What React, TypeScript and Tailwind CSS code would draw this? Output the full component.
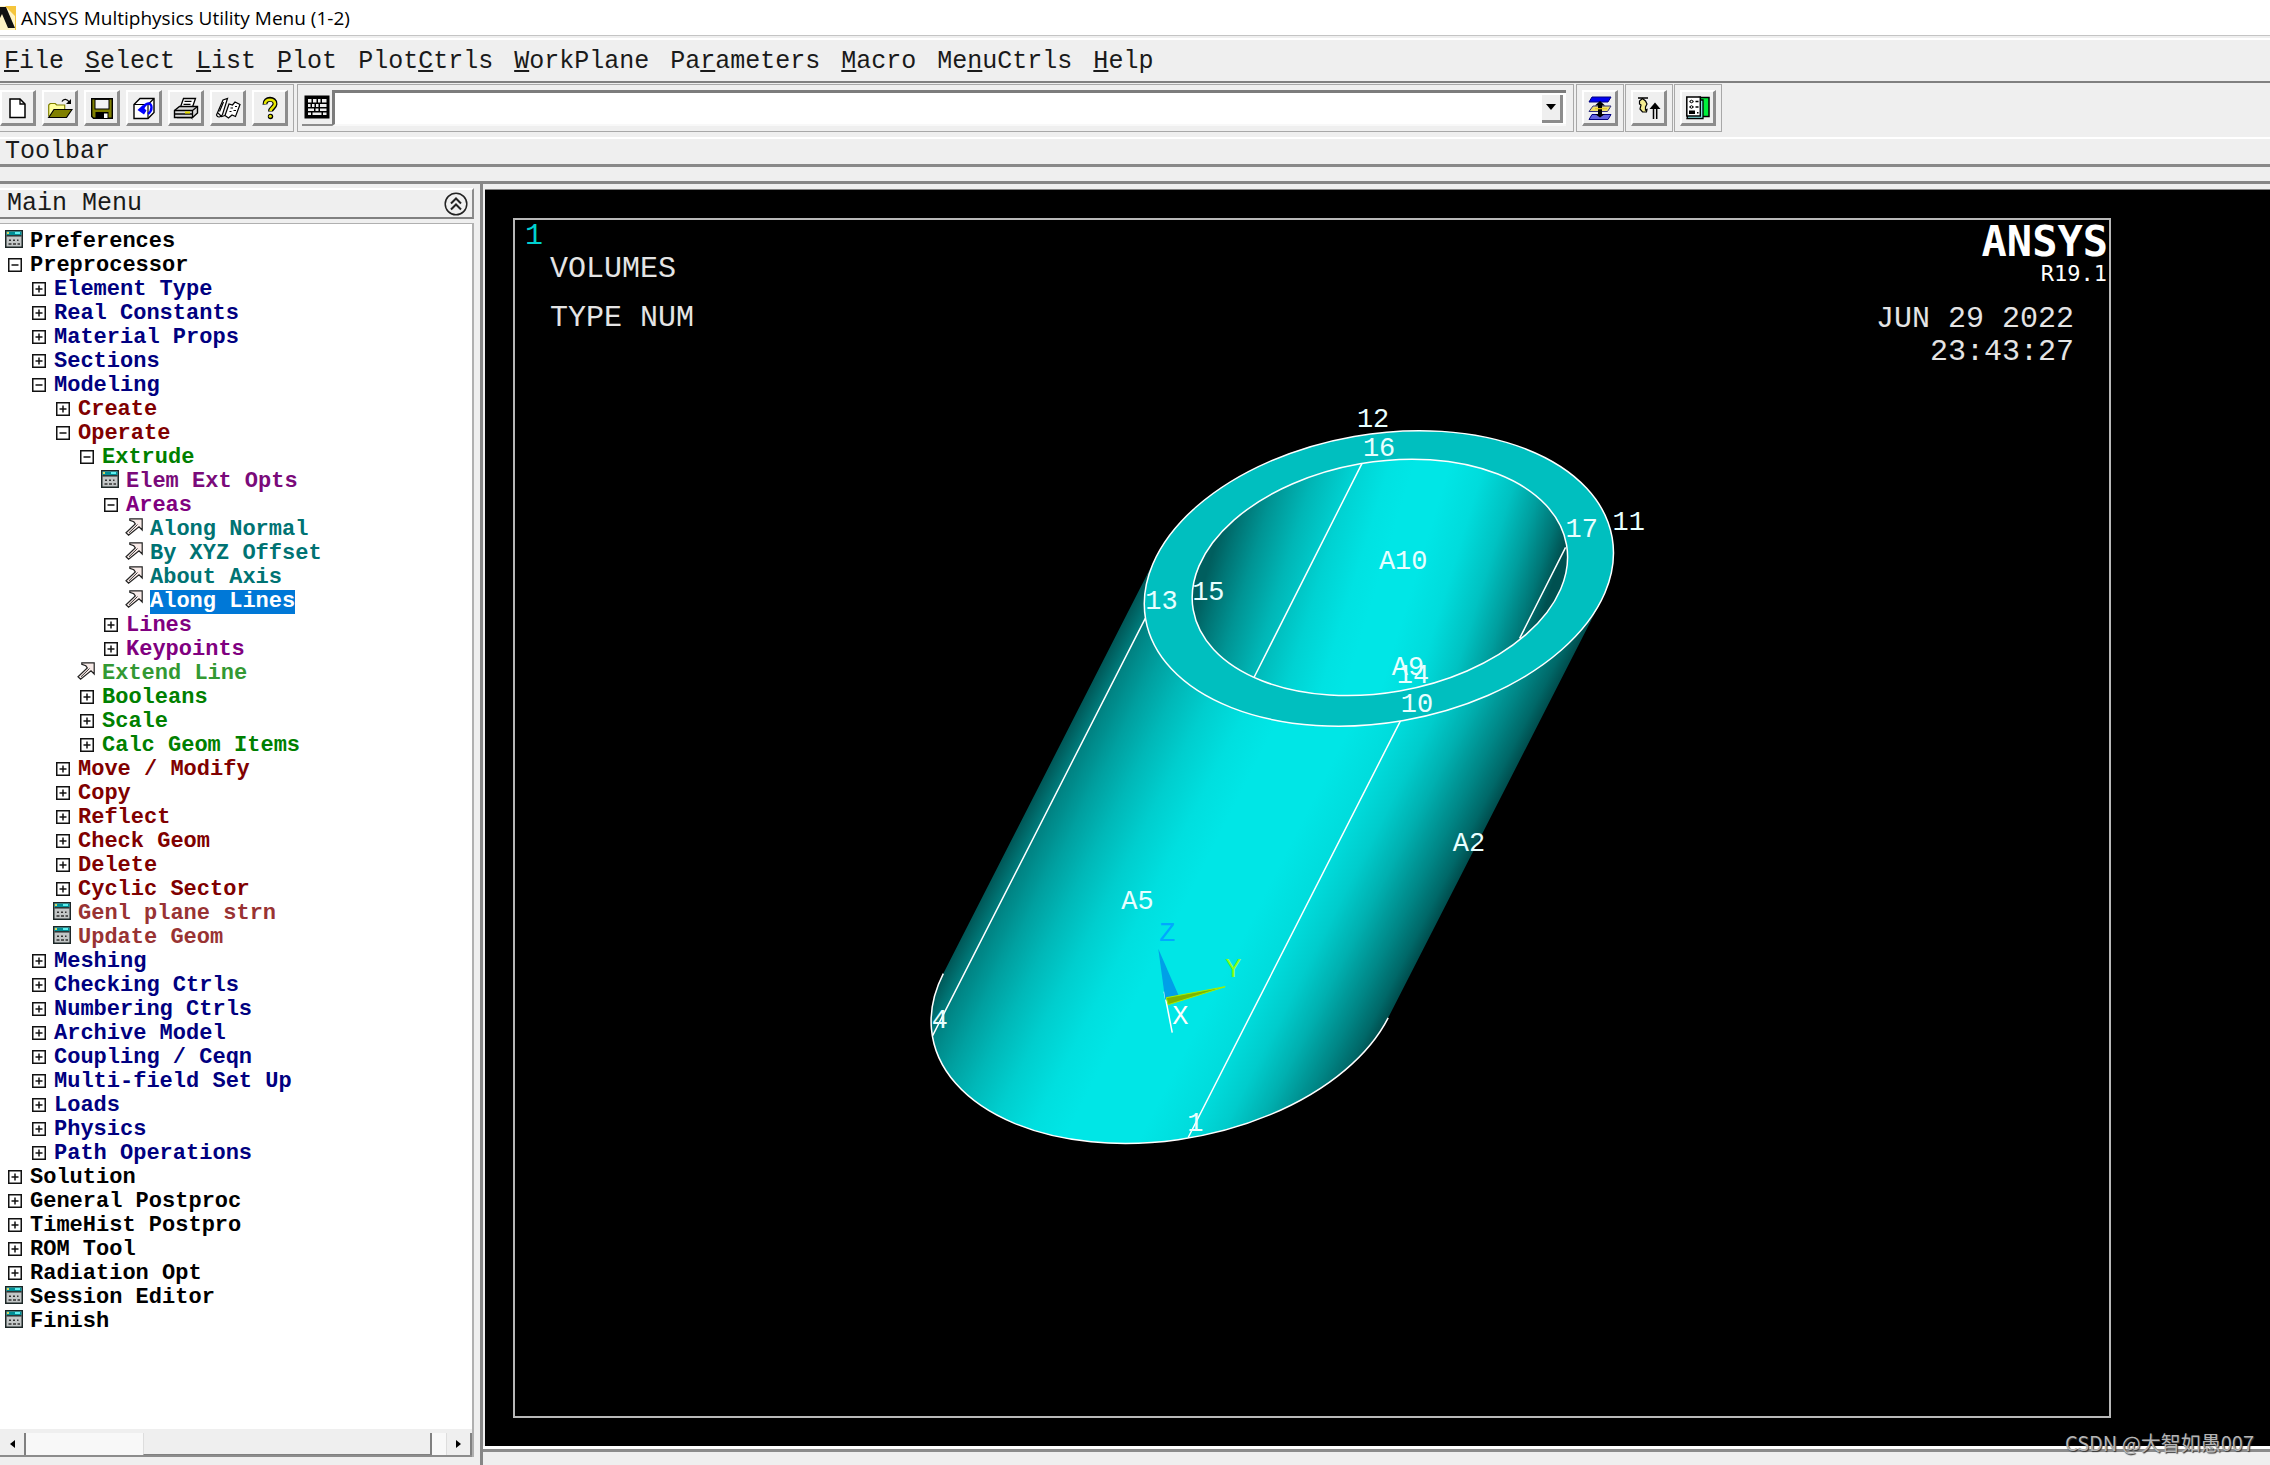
import React from "react";

type Kind = "plus" | "minus" | "dialog" | "pick";
type Tone = "root" | "navy" | "maroon" | "brick" | "green" | "lime" | "purple" | "plum" | "teal" | "selected";
type Node = [level: number, kind: Kind, label: string, tone: Tone];

const toneClass: Record<Tone, string> = {
  root: "text-black",
  navy: "text-[#000080]",
  maroon: "text-[#800000]",
  brick: "text-[#993333]",
  green: "text-[#008000]",
  lime: "text-[#339933]",
  purple: "text-[#800080]",
  plum: "text-[#7a0a7a]",
  teal: "text-[#007373]",
  selected: "bg-[#0078d7] text-white",
};

const indentClass = ["pl-[5px]", "pl-[29px]", "pl-[53px]", "pl-[77px]", "pl-[101px]", "pl-[125px]"];

const tree: Node[] = [
  [0, "dialog", "Preferences", "root"],
  [0, "minus", "Preprocessor", "root"],
  [1, "plus", "Element Type", "navy"],
  [1, "plus", "Real Constants", "navy"],
  [1, "plus", "Material Props", "navy"],
  [1, "plus", "Sections", "navy"],
  [1, "minus", "Modeling", "navy"],
  [2, "plus", "Create", "maroon"],
  [2, "minus", "Operate", "maroon"],
  [3, "minus", "Extrude", "green"],
  [4, "dialog", "Elem Ext Opts", "plum"],
  [4, "minus", "Areas", "purple"],
  [5, "pick", "Along Normal", "teal"],
  [5, "pick", "By XYZ Offset", "teal"],
  [5, "pick", "About Axis", "teal"],
  [5, "pick", "Along Lines", "selected"],
  [4, "plus", "Lines", "purple"],
  [4, "plus", "Keypoints", "purple"],
  [3, "pick", "Extend Line", "lime"],
  [3, "plus", "Booleans", "green"],
  [3, "plus", "Scale", "green"],
  [3, "plus", "Calc Geom Items", "green"],
  [2, "plus", "Move / Modify", "maroon"],
  [2, "plus", "Copy", "maroon"],
  [2, "plus", "Reflect", "maroon"],
  [2, "plus", "Check Geom", "maroon"],
  [2, "plus", "Delete", "maroon"],
  [2, "plus", "Cyclic Sector", "maroon"],
  [2, "dialog", "Genl plane strn", "brick"],
  [2, "dialog", "Update Geom", "brick"],
  [1, "plus", "Meshing", "navy"],
  [1, "plus", "Checking Ctrls", "navy"],
  [1, "plus", "Numbering Ctrls", "navy"],
  [1, "plus", "Archive Model", "navy"],
  [1, "plus", "Coupling / Ceqn", "navy"],
  [1, "plus", "Multi-field Set Up", "navy"],
  [1, "plus", "Loads", "navy"],
  [1, "plus", "Physics", "navy"],
  [1, "plus", "Path Operations", "navy"],
  [0, "plus", "Solution", "root"],
  [0, "plus", "General Postproc", "root"],
  [0, "plus", "TimeHist Postpro", "root"],
  [0, "plus", "ROM Tool", "root"],
  [0, "plus", "Radiation Opt", "root"],
  [0, "dialog", "Session Editor", "root"],
  [0, "dialog", "Finish", "root"],
];

function TreeIcon({ kind }: { kind: Kind }) {
  if (kind === "plus" || kind === "minus") {
    return (
      <svg viewBox="0 0 18 18" className="size-[18px]" fill="none" stroke="#111">
        <rect x="3.75" y="4.75" width="12.5" height="12.5" strokeWidth="1.5" />
        <path d="M6.5 11h7" strokeWidth="1.5" />
        {kind === "plus" && <path d="M10 7.5v7" strokeWidth="1.5" />}
      </svg>
    );
  }
  if (kind === "dialog") {
    return (
      <svg viewBox="0 0 18 18" className="size-[18px]">
        <rect x="0.75" y="0.75" width="16.5" height="16.5" fill="#c3c7c7" stroke="#1c2626" strokeWidth="1.5" />
        <rect x="1.5" y="1.5" width="15" height="3.5" fill="#008f96" />
        <rect x="2" y="2" width="2" height="2" fill="#d8d860" />
        <rect x="10" y="2" width="5" height="2" fill="#5ff0f0" />
        <path d="M1.5 5.8h15" stroke="#1c2626" strokeWidth="1.4" />
        <path d="M4 10.2h2M8 10.2h2M12 10.2h1.5M3.5 14h3M8 14h3M12.5 14h2.5" stroke="#333" strokeWidth="1.4" />
      </svg>
    );
  }
  return (
    <svg viewBox="0 0 18 18" className="size-[18px]">
      <path
        d="M4.800 0.800H17.200V12L14 8.800L3.600 17.200L1 14.800L10.300 6L8.800 3.800L4.800 2.300Z"
        fill="#f8ebe8"
        stroke="#222"
        strokeWidth="1.200"
      />
      <path d="M12.500 6.500L4 14.800" stroke="#222" strokeWidth="0.900" />
    </svg>
  );
}

const menus: [string, string, string][] = [
  ["", "F", "ile"],
  ["", "S", "elect"],
  ["", "L", "ist"],
  ["", "P", "lot"],
  ["Plot", "C", "trls"],
  ["", "W", "orkPlane"],
  ["Pa", "r", "ameters"],
  ["", "M", "acro"],
  ["Me", "n", "uCtrls"],
  ["", "H", "elp"],
];

function ToolButton({ label, children }: { label: string; children: React.ReactNode }) {
  return (
    <button
      type="button"
      aria-label={label}
      className="flex size-9 shrink-0 items-center justify-center border-r-[3px] border-b-[3px] border-l-2 border-t-2 border-t-white border-l-white border-r-[#8c8c8c] border-b-[#8c8c8c] bg-[#efefef]"
    >
      <svg viewBox="0 0 26 24" className="h-6 w-[26px]">
        {children}
      </svg>
    </button>
  );
}

const groupBox = "flex items-center border border-[#a8a8a8] h-12";

function Toolbar() {
  return (
    <div className="flex h-[54px] items-start gap-[3px] pt-px">
      <div className={groupBox + " -ml-px gap-1.5 pr-[5px]"}>
        <ToolButton label="New Analysis">
          <path d="M5 3h10l5 5v13.5H5z" fill="#fff" stroke="#000" strokeWidth="1.5" />
          <path d="M15 3v5h5" fill="none" stroke="#000" strokeWidth="1.3" />
        </ToolButton>
        <ToolButton label="Open ANSYS File">
          <path d="M1.7 20.5V9l1.5-1.500h5L9.7 9h8v4" fill="#ffff9c" stroke="#808000" strokeWidth="1.2" />
          <path d="M1.7 21.5L7 13.5h18L19.5 21.5z" fill="#808000" stroke="#000" strokeWidth="1.2" />
          <path d="M15 5.5c1.5-3 5-3 7.500.8" fill="none" stroke="#000" strokeWidth="1.3" />
          <path d="M24 3v5h-5z" fill="#000" />
        </ToolButton>
        <ToolButton label="Save">
          <path d="M2.7 2.7h20.6v19.6H4.500l-1.800-1.800z" fill="#808000" stroke="#000" strokeWidth="1.4" />
          <rect x="6" y="3.4" width="14" height="9.6" fill="#f4f4f4" stroke="#000" />
          <rect x="6.5" y="16" width="13" height="6.5" fill="#000" />
          <rect x="15" y="17.5" width="3.5" height="4.5" fill="#fff" />
        </ToolButton>
        <ToolButton label="Pan-Zoom-Rotate">
          <path d="M3 8.5L9 2.5h14v14l-6 6H3z" fill="#fff" stroke="#000" strokeWidth="1.4" />
          <path d="M3 8.5h14v14M17 8.5l6-6" fill="none" stroke="#000" strokeWidth="1.2" />
          <path d="M6.500 14l6-5.500v3l3 3-2.500 4z" fill="#0000ff" />
          <path d="M12 12.500c3-6.500 8.500-6.500 8.500-1 0 3-1.500 5-3.500 6.500" fill="none" stroke="#0000ff" strokeWidth="2.400" />
        </ToolButton>
        <ToolButton label="Image Capture">
          <path d="M7.5 11L10.5 2.5h12L19.5 11z" fill="#fff" stroke="#000" strokeWidth="1.3" />
          <path d="M11.5 5.3h7M10.5 8.3h7" stroke="#000" strokeWidth="1.2" />
          <path d="M1.5 14.5L6.5 10.5H24.5V17l-5 4.5H1.5z" fill="#d8d8d8" stroke="#000" strokeWidth="1.4" />
          <path d="M1.5 14.5h18v7M19.5 14.5l5-4M2 18h17" fill="none" stroke="#000" strokeWidth="1.3" />
          <rect x="12" y="15.5" width="5" height="2" fill="#e8e000" />
          <path d="M4 21.7h14l1.5 1.3" stroke="#000" fill="none" />
        </ToolButton>
        <ToolButton label="Report Generator">
          <path d="M1.5 19L8 4l4.500-1.500L7.500 18.500C6 21.500 2.500 22 1.500 19z" fill="#fff" stroke="#000" strokeWidth="1.2" />
          <path d="M10 19.5L14 8l3.500 1 2.500-3 5 2.500L20.500 20.500l-3.500-1.500-3.500 3z" fill="#fff" stroke="#000" strokeWidth="1.2" />
          <path d="M15.500 12h2.500M20 10.500h2M14.500 15.500h2M18.500 14.500h2.500M8.500 6L4.500 15.5M3 17l3.500 3.500 3.500-1" stroke="#000" strokeWidth="1.2" fill="none" />
        </ToolButton>
        <ToolButton label="ANSYS Help">
          <path d="M8 8.500C7.500 1.500 18.500 1.500 18 8c-.3 4-4.500 4-4.500 7.500" fill="none" stroke="#000" strokeWidth="5" />
          <path d="M8 8C7.700 2.300 18.200 2.300 18 8c-.3 3.500-4.500 4-4.500 7" fill="none" stroke="#e6e600" strokeWidth="2.600" />
          <circle cx="13.5" cy="20.5" r="2.700" fill="#000" />
          <circle cx="13.3" cy="20.2" r="1.5" fill="#e6e600" />
        </ToolButton>
      </div>

      <div className={groupBox + " w-[1277px] min-w-0 pl-1 pr-[7px]"}>
        <button
          type="button"
          aria-label="Command Window"
          className="flex h-9 w-[30px] shrink-0 items-center border-b-2 border-b-[#8c8c8c] pl-0.5"
        >
          <svg viewBox="0 0 26 24" className="h-6 w-[26px]">
            <rect x="0.5" y="0.5" width="25" height="23" fill="#000" />
            <g fill="#efefef">
              <path d="M4 4h3.500v3.500H4zM9 4h3.500v3.500H9zM14 4h2.500v3.500H14zM18 4h4.500v3.500H18z" />
              <path d="M4 9h2.500v3H4zM8 9h2.500v3H8zM12 9h2.500v3H12zM16 9h6.500v3H16z" />
              <path d="M4 13.500h6V16H4zM11.500 13.500h3V16h-3zM16 13.500h6.500V16H16z" />
              <path d="M4 17.500h3V20H4zM8.500 17.500h9V20h-9zM19 17.500h3.500V20H19z" />
            </g>
          </svg>
        </button>
        <div className="flex h-9 min-w-0 flex-1 items-center border-b-2 border-l-[3px] border-t-[3px] border-b-[#f8f8f8] border-l-[#7c7c7c] border-t-[#7c7c7c] bg-white pr-[3px]">
          <input
            aria-label="Command"
            className="h-full min-w-0 flex-1 bg-white px-2 font-['Liberation_Mono',monospace] text-[25px] outline-none"
          />
          <button
            type="button"
            aria-label="Command history"
            className="flex h-7 w-[21px] items-center justify-center border-b-[3px] border-r-[3px] border-b-[#8c8c8c] border-r-[#8c8c8c] bg-[#efefef]"
          >
            <svg viewBox="0 0 10 6" className="h-1.5 w-2.5">
              <path d="M0 0h10L5 6z" fill="#000" />
            </svg>
          </button>
        </div>
      </div>

      <div className="-ml-px flex gap-px">
        <div className={groupBox + " px-[5px]"}>
          <ToolButton label="Raise Hidden">
            <path d="M5 1h19l-3 5H2z" fill="#0000f0" stroke="#000080" />
            <path d="M5 18.5h19l-3 5H2z" fill="#6464e0" stroke="#000080" />
            <path d="M6 10h18l-3.500 5.500H2z" fill="#f0e068" stroke="#303080" />
            <path d="M13 5l5 4.500h-3V18h3l-5 3.500L8 18h3V9.500H8z" fill="#000" />
            <path d="M8 12.700h12" stroke="#e8c820" strokeWidth="1.200" />
          </ToolButton>
        </div>
        <div className={groupBox + " px-[5px]"}>
          <ToolButton label="Reset Picking">
            <path d="M2 2h10" stroke="#000" strokeWidth="1.5" />
            <path
              d="M6.500 2.500L3.500 5v3l1.500 1-1 4 2.500 3h4l.5-2.500-1.500.5V11l1.500-3-1.500-3z"
              fill="#f4ec90"
              stroke="#000"
              strokeWidth="1.2"
            />
            <path d="M19 6.500l-5.500 6.500h11z" fill="#000" />
            <path d="M17.5 12v11M20.7 12v11" stroke="#000" strokeWidth="1.5" />
          </ToolButton>
        </div>
        <div className={groupBox + " px-[5px]"}>
          <ToolButton label="Contact Manager">
            <rect x="14" y="1.5" width="10" height="19" fill="#00f03c" stroke="#000" strokeWidth="1.5" />
            <path d="M6 4h12v18.5H2z" fill="#8ff0f0" stroke="#000" strokeWidth="1.3" />
            <rect x="1.8" y="1" width="13.5" height="19" fill="#fff" stroke="#000" strokeWidth="1.5" />
            <path d="M4.5 5.5h4M10.5 5.5h3M4.5 11h4M10.5 11h3" stroke="#000" strokeWidth="1.5" />
            <circle cx="6.5" cy="5.5" r="1.3" fill="#fff" stroke="#000" />
            <circle cx="6.5" cy="11" r="1.3" fill="#fff" stroke="#000" />
            <rect x="4" y="14.5" width="6" height="3.5" fill="#000" />
            <rect x="12" y="16" width="1.5" height="1.5" fill="#000" />
          </ToolButton>
        </div>
      </div>
    </div>
  );
}

const labels: [number, number, string][] = [
  [1357, 426, "12"],
  [1363, 455, "16"],
  [1566, 537, "17"],
  [1613, 530, "11"],
  [1145, 609, "13"],
  [1192, 600, "15"],
  [1379, 569, "A10"],
  [1392, 675, "A9"],
  [1397, 683, "14"],
  [1401, 712, "10"],
  [1453, 851, "A2"],
  [1121, 909, "A5"],
  [931, 1028, "4"],
  [1187, 1132, "1"],
];

const outerStops: [string, string][] = [
  ["0", "#005656"],
  ["0.05", "#008282"],
  ["0.12", "#00a0a0"],
  ["0.19", "#00b8b8"],
  ["0.27", "#00cece"],
  ["0.36", "#00dfdf"],
  ["0.44", "#00e6e6"],
  ["0.6", "#00e6e6"],
  ["0.7", "#00dcdc"],
  ["0.77", "#00cccc"],
  ["0.84", "#00b0b0"],
  ["0.92", "#008686"],
  ["0.97", "#006868"],
  ["1", "#004c4c"],
];

const innerStops: [string, string][] = [
  ["0", "#005e5e"],
  ["0.05", "#007676"],
  ["0.12", "#009494"],
  ["0.22", "#00b6b6"],
  ["0.33", "#00d2d2"],
  ["0.43", "#00e2e2"],
  ["0.5", "#00e6e6"],
  ["0.6", "#00e6e6"],
  ["0.7", "#00dcdc"],
  ["0.8", "#00c2c2"],
  ["0.88", "#009e9e"],
  ["0.95", "#007676"],
  ["1", "#005050"],
];

function Model() {
  return (
    <svg
      viewBox="515 219 1594 1198"
      className="absolute inset-0 h-full w-full"
      role="img"
      aria-label="Hollow cylinder volume"
    >
      <defs>
        <linearGradient id="outer" gradientUnits="userSpaceOnUse" x1="1193" y1="483" x2="1565" y2="673">
          {outerStops.map(([o, c]) => (
            <stop key={o} offset={o} stopColor={c} />
          ))}
        </linearGradient>
        <linearGradient id="inner" gradientUnits="userSpaceOnUse" x1="1231" y1="501" x2="1529" y2="653">
          {innerStops.map(([o, c]) => (
            <stop key={o} offset={o} stopColor={c} />
          ))}
        </linearGradient>
      </defs>
      <path d="M1156.2 555.8L942.7 973.8A237.2 144.4 -9.9 0 0 1388.3 1018.2L1601.8 600.2Z" fill="url(#outer)" />
      <g fill="none" stroke="#fff" strokeWidth="1.5">
        <path d="M942.7 973.8A237.2 144.4 -9.9 0 0 1388.3 1018.2" />
        <path d="M1145 618L932 1036M1401 720L1188 1138" />
        <ellipse cx="1379" cy="578" rx="237.2" ry="144.4" transform="rotate(-9.9 1379 578)" fill="#00bfbf" />
        <ellipse cx="1380" cy="577" rx="189.8" ry="115.5" transform="rotate(-9.9 1380 577)" fill="url(#inner)" />
        <path d="M1362 463L1254 677M1566 547L1520 638" />
        <path d="M1164 992L1172 1033" />
      </g>
      <path d="M1158 949L1179 997L1165 1000Z" fill="#009fe8" />
      <path d="M1166 998L1225 987L1168 1005Z" fill="#7fb400" stroke="#a6f000" strokeWidth="1" />
      <g className="font-['Liberation_Mono',monospace] text-[27px]" fill="#e8ffff">
        {labels.map(([x, y, t]) => (
          <text key={t} x={x} y={y}>
            {t}
          </text>
        ))}
      </g>
      <g className="font-['Liberation_Mono',monospace] text-[27px]">
        <text x="1159" y="941" fill="#00a8ff">
          Z
        </text>
        <text x="1225" y="977" fill="#8cff1a">
          Y
        </text>
        <text x="1172" y="1024" fill="#fff">
          X
        </text>
      </g>
    </svg>
  );
}

export default function App() {
  return (
    <div className="relative flex h-screen min-h-[1465px] flex-col overflow-hidden bg-[#efefef] font-['Liberation_Mono',monospace] text-[#1a1a1a]">
      <header className="flex h-9 shrink-0 items-center gap-[5px] border-b border-[#c4c4c4] bg-white">
        <svg viewBox="0 0 16 24" className="h-6 w-4">
          <rect width="16" height="24" fill="#fff3c4" />
          <path d="M5 0h11v24h-1V10z" fill="#f5c53c" />
          <path d="M0 1h6l9 21H8L2 8 0 12z" fill="#111" />
        </svg>
        <h1 className="font-['Open_Sans',sans-serif] text-[19px] leading-6 text-black">
          ANSYS Multiphysics Utility Menu (1-2)
        </h1>
      </header>

      <nav className="mt-0.5 flex h-[45px] shrink-0 items-center gap-[21px] border-b-2 border-t-2 border-b-[#808080] border-t-white pl-1 pt-0.5 text-[25px] leading-[30px]">
        {menus.map(([a, u, b]) => (
          <button type="button" key={a + u + b} className="whitespace-pre">
            {a}
            <span className="underline decoration-2 underline-offset-2">{u}</span>
            {b}
          </button>
        ))}
      </nav>

      <Toolbar />

      <div className="flex h-[30px] shrink-0 items-center border-b-[3px] border-t-2 border-b-[#888] border-t-white pl-[5px] text-[25px] leading-[26px]">
        Toolbar
      </div>
      <div className="h-[17px] shrink-0 border-b-[3px] border-b-[#868686]" />

      <div className="flex min-h-0 flex-1">
        <aside className="flex w-[480px] shrink-0 flex-col pr-1.5">
          <div className="mt-1 flex h-[31px] shrink-0 items-center justify-between border-b-2 border-r-2 border-t-2 border-b-[#808080] border-r-[#8c8c8c] border-t-white pl-[7px] pr-1">
            <h2 className="text-[25px] leading-[26px]">Main Menu</h2>
            <button type="button" aria-label="Collapse main menu">
              <svg viewBox="0 0 24 24" className="size-6" fill="none" stroke="#222">
                <circle cx="12" cy="12" r="10.8" strokeWidth="1.5" />
                <path d="M7 11.5L12 6.5L17 11.5M7 17.5L12 12.5L17 17.5" strokeWidth="2" />
              </svg>
            </button>
          </div>
          <div className="mt-1 flex min-h-0 flex-1 flex-col border-r-2 border-t border-[#b0b0b0] bg-white pt-1.5">
            <ul className="flex-1 text-[22px] font-bold leading-6">
              {tree.map(([level, kind, label, tone]) => (
                <li key={label} className={"flex h-6 items-start gap-[7px] " + indentClass[level]}>
                  <TreeIcon kind={kind} />
                  <span className={"whitespace-pre " + toneClass[tone]}>{label}</span>
                </li>
              ))}
            </ul>
            <div className="h-1 bg-[#efefef]" />
            <div className="flex h-6 shrink-0 border-b-2 border-[#8c8c8c] bg-[#f8f8f8]">
              <button
                type="button"
                aria-label="Scroll left"
                className="flex w-[26px] items-center justify-center border-r-2 border-[#808080] bg-[#efefef]"
              >
                <svg viewBox="0 0 5 8" className="h-2 w-[5px]">
                  <path d="M5 0v8L0 4z" />
                </svg>
              </button>
              <div className="flex flex-1 pl-[117px] pr-3.5">
                <div className="flex-1 border-b border-l border-r-2 border-b-[#808080] border-l-[#ddd] border-r-[#808080] bg-[#efefef]" />
              </div>
              <button
                type="button"
                aria-label="Scroll right"
                className="flex w-[26px] items-center justify-center border-l border-r-2 border-l-[#ddd] border-r-[#808080] bg-[#efefef]"
              >
                <svg viewBox="0 0 5 8" className="h-2 w-[5px]">
                  <path d="M0 0v8l5-4z" />
                </svg>
              </button>
            </div>
          </div>
          <div className="h-2 shrink-0" />
        </aside>

        <main className="flex min-w-0 flex-1 flex-col border-l-[3px] border-[#868686]">
          <div className="ml-0.5 mt-[5px] flex min-h-0 flex-1 border-t border-t-[#808080] bg-black pb-7 pl-7 pr-[159px] pt-7">
            <div className="relative flex flex-1 items-start justify-between border-2 border-[#b8b8b8] text-[30px] leading-[33px] text-[#e4e4e4]">
              <Model />
              <div className="relative">
                <p className="pl-2.5 text-[#00d0d0]">1</p>
                <p className="pl-[35px]">VOLUMES</p>
                <p className="mt-4 pl-[35px]">TYPE NUM</p>
              </div>
              <div className="relative text-right">
                <p className="pr-px font-['DejaVu_Sans_Mono',monospace] text-[42px] font-bold leading-[44px] text-white">
                  ANSYS
                </p>
                <p className="pr-0.5 font-['DejaVu_Sans_Mono',monospace] text-[22px] leading-5 text-white">R19.1</p>
                <p className="mt-[19px] pr-[35px]">JUN 29 2022</p>
                <p className="pr-[35px]">23:43:27</p>
              </div>
            </div>
          </div>
          <div className="h-[19px] shrink-0 border-t-[3px] border-white">
            <div className="h-[3px] bg-[#8c8c8c]" />
          </div>
        </main>
      </div>

      <p className="absolute bottom-2 right-4 font-['Noto_Sans_CJK_SC',sans-serif] text-[20px] leading-7 text-[#b4b4b4] [text-shadow:1px_1px_1px_#333]">
        CSDN @大智如愚007
      </p>
    </div>
  );
}
